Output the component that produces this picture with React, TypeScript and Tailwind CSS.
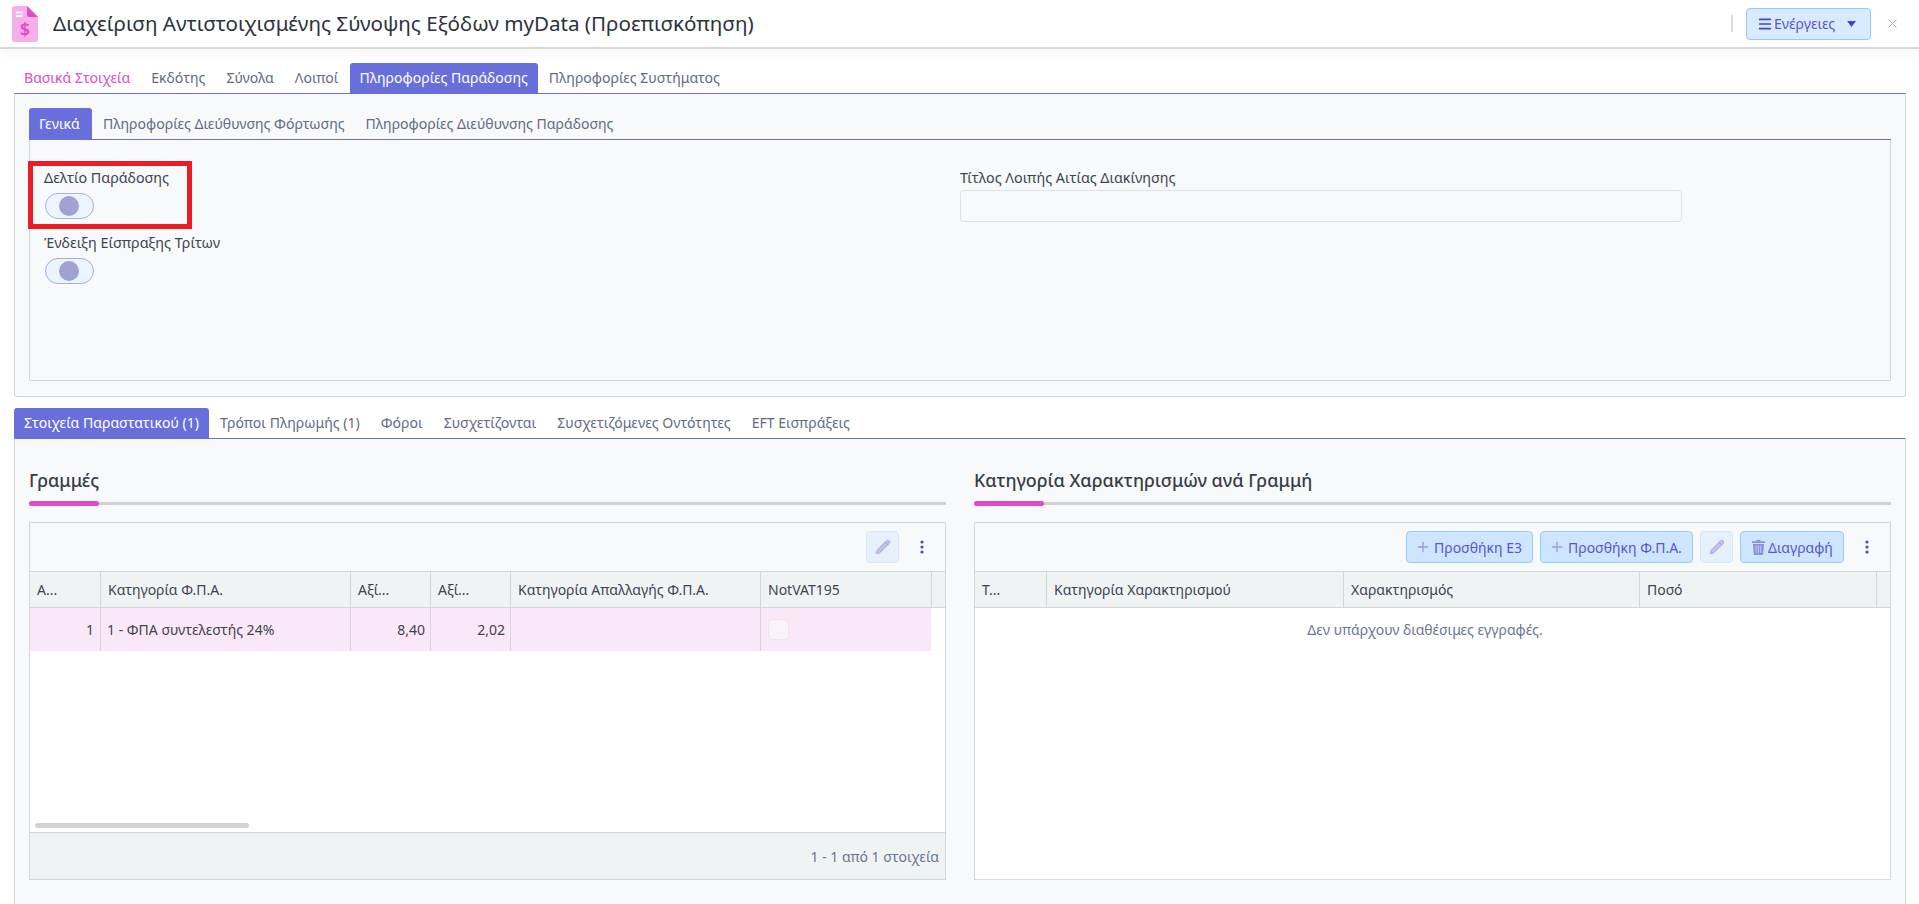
import { Menu, Pencil, Plus, X } from "lucide-react";

const topTabs = ["Βασικά Στοιχεία", "Εκδότης", "Σύνολα", "Λοιποί", "Πληροφορίες Παράδοσης", "Πληροφορίες Συστήματος"];
const innerTabs = ["Γενικά", "Πληροφορίες Διεύθυνσης Φόρτωσης", "Πληροφορίες Διεύθυνσης Παράδοσης"];
const lowerTabs = ["Στοιχεία Παραστατικού (1)", "Τρόποι Πληρωμής (1)", "Φόροι", "Συσχετίζονται", "Συσχετιζόμενες Οντότητες", "EFT Εισπράξεις"];

function Tab({ label, active, pink, w }: { label: string; active?: boolean; pink?: boolean; w?: string }) {
  return (
    <div
      className={
        "h-full px-[10px] flex items-center text-[14.05px] whitespace-nowrap rounded-t-[3px] " +
        (active ? "bg-[#686fdb] text-white " : pink ? "text-[#e44bc4] " : "text-[#5f6b85] ") +
        (w ?? "")
      }
    >
      {label}
    </div>
  );
}

function Toggle() {
  return (
    <div className="w-[49px] h-[26px] pr-[1px] rounded-full border border-[#a9aedb] bg-[#ebf5ff] flex items-center justify-center">
      <div className="w-[20px] h-[20px] rounded-full bg-[#a0a2d0]" />
    </div>
  );
}

function Kebab() {
  return (
    <svg width="4" height="14" viewBox="0 0 4 14" className="text-[#5046c8]">
      <circle cx="2" cy="2" r="1.6" fill="currentColor" />
      <circle cx="2" cy="7" r="1.6" fill="currentColor" />
      <circle cx="2" cy="12" r="1.6" fill="currentColor" />
    </svg>
  );
}

function EditButton() {
  return (
    <div className="w-[33px] h-[32px] rounded-[4px] border border-[#d6e8fb] bg-[#e6f1fc] flex items-center justify-center">
      <Pencil size={16} className="text-[#aaa3e3]" fill="#c5c0ee" strokeWidth={1.5} />
    </div>
  );
}

function ActionButton({ icon, label, w }: { icon: React.ReactNode; label: string; w: string }) {
  return (
    <div className={"h-[32px] rounded-[4px] border border-[#98caf9] bg-[#cde5fe] flex items-center gap-[3px] text-[14px] text-[#5a55cf] " + w}>
      {icon}
      {label}
    </div>
  );
}

function TrashIcon() {
  return (
    <svg width="13" height="15" viewBox="0 0 13 15" fill="#8f8ddc">
      <rect x="4.5" y="0" width="4" height="1.5" rx="0.5" />
      <rect x="0" y="1.2" width="13" height="1.8" rx="0.5" />
      <path d="M1 4H12L11.2 14a1 1 0 0 1-1 1H2.8a1 1 0 0 1-1-1Z" />
      <path d="M4.2 5.5V13M6.5 5.5V13M8.8 5.5V13" stroke="#cde5fe" strokeWidth="0.8" />
    </svg>
  );
}

function SectionTitle({ title }: { title: string }) {
  return (
    <div>
      <h3 className="h-[35px] flex items-center text-[17.9px] font-medium text-[#373d47]">{title}</h3>
      <div className="relative h-[3px] mt-[4px] bg-[#d0d1d4]">
        <div className="absolute left-0 top-[-1px] w-[70px] h-[5px] rounded-full bg-[#e04ac6]" />
      </div>
    </div>
  );
}

function HeadCell({ label, w }: { label?: string; w: string }) {
  return (
    <div className={"h-full flex items-center pl-[7px] text-[14px] text-[#3e4450] whitespace-nowrap border-r border-[#d4d7da] " + w}>
      {label}
    </div>
  );
}

export default function App() {
  return (
    <div className="relative w-[1919px] h-[904px] overflow-hidden bg-white font-['Noto_Sans',sans-serif]">
      {/* Header */}
      <header className="relative h-[49px] flex items-center border-b-2 border-[#d6d6d6] shadow-[0_3px_10px_rgba(0,0,0,0.05)]">
        <svg width="26" height="36" viewBox="0 0 26 36" className="ml-[12px]">
          <path d="M3 0H15L26 11V33a3 3 0 0 1-3 3H3a3 3 0 0 1-3-3V3a3 3 0 0 1 3-3Z" fill="#f5b0e9" />
          <path d="M15 0L26 11H17a2 2 0 0 1-2-2Z" fill="#e04ac6" />
          <rect x="4" y="5.7" width="6.7" height="1.7" fill="#fff" />
          <rect x="4" y="9.3" width="6.7" height="1.7" fill="#fff" />
          <text x="13" y="29.5" textAnchor="middle" fontSize="18" fontWeight="600" fill="#e04ac6" fontFamily="Noto Sans">$</text>
        </svg>
        <h1 className="ml-[15px] text-[20.6px] text-[#2c323c] whitespace-nowrap">Διαχείριση Αντιστοιχισμένης Σύνοψης Εξόδων myData (Προεπισκόπηση)</h1>
        <div className="ml-auto w-[2px] h-[17px] bg-[#d5dde5]" />
        <div className="ml-[13px] w-[125px] h-[32px] rounded-[4px] border border-[#98caf9] bg-[#d8eafe] flex items-center pl-[10px] text-[14px] text-[#5a55cf]">
          <Menu size={16} strokeWidth={2.6} className="text-[#4a42c8]" />
          <span className="ml-[1px]">Ενέργειες</span>
          <svg width="9" height="6" viewBox="0 0 9 6" className="ml-[12px] text-[#4a42c8]">
            <path d="M0 0H9L4.5 6Z" fill="currentColor" />
          </svg>
        </div>
        <X size={15} strokeWidth={1.6} className="ml-[14px] mr-[19px] text-[#b7b3e8]" />
      </header>

      {/* Upper tabs */}
      <div className="absolute left-[14px] top-[63px] w-[1892px]">
        <div className="h-[30px] flex gap-[1px]">
          {topTabs.map((t, i) => (
            <Tab key={t} label={t} active={i === 4} pink={i === 0} />
          ))}
        </div>
        <div className="h-[304px] px-[14px] pt-[14px] border-t border-t-[#686fdb] border-x border-b border-x-[#d4d6d9] border-b-[#d4d6d9] rounded-b-[3px] bg-[#f8f9fb]">
          <div className="h-[32px] flex gap-[1px] border-b border-[#686fdb]">
            {innerTabs.map((t, i) => (
              <Tab key={t} label={t} active={i === 0} w={i === 0 ? "w-[63px]" : ""} />
            ))}
          </div>
          <div className="relative h-[241px] border-x border-b border-[#d4d6d9] rounded-b-[2px]">
            <div className="absolute left-[14px] top-[28px] text-[14.3px] leading-[20px] text-[#3e4450]">Δελτίο Παράδοσης</div>
            <div className="absolute left-[15px] top-[53px]"><Toggle /></div>
            <div className="absolute left-[14px] top-[93px] text-[14.3px] leading-[20px] text-[#3e4450]">Ένδειξη Είσπραξης Τρίτων</div>
            <div className="absolute left-[15px] top-[118px]"><Toggle /></div>
            <div className="absolute left-[930px] top-[28px] text-[14.3px] leading-[20px] text-[#3e4450]">Τίτλος Λοιπής Αιτίας Διακίνησης</div>
            <div className="absolute left-[930px] top-[50px] w-[722px] h-[32px] rounded-[4px] border border-[#dfe1e4] bg-[#f8f9fb]" />
          </div>
        </div>
      </div>

      {/* Highlight */}
      <div className="absolute left-[28px] top-[161px] w-[164px] h-[68px] border-[5px] border-[#ed1c24]" />

      {/* Lower tabs */}
      <div className="absolute left-[14px] top-[408px] w-[1892px] h-[496px]">
        <div className="h-[30px] flex gap-[1px]">
          {lowerTabs.map((t, i) => (
            <Tab key={t} label={t} active={i === 0} />
          ))}
        </div>
        <div className="relative h-[466px] border-t border-t-[#686fdb] border-x border-x-[#d4d6d9] bg-[#f8f9fb]">
          {/* Left grid */}
          <div className="absolute left-[14px] top-[24px] w-[917px]">
            <SectionTitle title="Γραμμές" />
          </div>
          <div className="absolute left-[14px] top-[83px] w-[917px] h-[358px] border border-[#d4d6d9] flex flex-col">
            <div className="h-[48px] flex items-center justify-end gap-[21px] pr-[21px]">
              <EditButton />
              <Kebab />
            </div>
            <div className="h-[37px] flex border-y border-[#d4d6d9] bg-[#f0f3f4]">
              <HeadCell label="Α..." w="w-[71px]" />
              <HeadCell label="Κατηγορία Φ.Π.Α." w="w-[250px]" />
              <HeadCell label="Αξί..." w="w-[80px]" />
              <HeadCell label="Αξί..." w="w-[80px]" />
              <HeadCell label="Κατηγορία Απαλλαγής Φ.Π.Α." w="w-[250px]" />
              <HeadCell label="NotVAT195" w="w-[171px]" />
            </div>
            <div className="flex-1 relative bg-white">
              <div className="flex w-[901px] h-[43px] bg-[#fae7f8] text-[14px] text-[#3e4450]">
                <div className="w-[71px] pr-[6px] flex items-center justify-end border-r border-[#d4d6d9]">1</div>
                <div className="w-[250px] pl-[6px] flex items-center border-r border-[#d4d6d9]">1 - ΦΠΑ συντελεστής 24%</div>
                <div className="w-[80px] pr-[5px] flex items-center justify-end border-r border-[#d4d6d9]">8,40</div>
                <div className="w-[80px] pr-[5px] flex items-center justify-end border-r border-[#d4d6d9]">2,02</div>
                <div className="w-[250px] border-r border-[#d4d6d9]" />
                <div className="w-[170px] pl-[7px] pt-[11px]">
                  <div className="w-[21px] h-[21px] rounded-[4px] border border-[#eee3ef] bg-[#f8f3f9]" />
                </div>
              </div>
              <div className="absolute left-[5px] bottom-[4px] w-[214px] h-[5px] rounded-full bg-[#d0d3d5]" />
            </div>
            <div className="h-[47px] flex items-center justify-end pr-[6px] border-t border-[#d4d6d9] bg-[#f0f3f4] text-[14px] text-[#6b7590]">1 - 1 από 1 στοιχεία</div>
          </div>

          {/* Right grid */}
          <div className="absolute left-[959px] top-[24px] w-[917px]">
            <SectionTitle title="Κατηγορία Χαρακτηρισμών ανά Γραμμή" />
          </div>
          <div className="absolute left-[959px] top-[83px] w-[917px] h-[358px] border border-[#d4d6d9] flex flex-col">
            <div className="h-[48px] flex items-center justify-end pr-[21px]">
              <ActionButton icon={<Plus size={16} className="text-[#9d9be0]" />} label="Προσθήκη Ε3" w="w-[127px] pl-[8px]" />
              <ActionButton icon={<Plus size={16} className="text-[#9d9be0]" />} label="Προσθήκη Φ.Π.Α." w="w-[153px] pl-[8px] ml-[7px]" />
              <div className="ml-[7px]"><EditButton /></div>
              <ActionButton icon={<TrashIcon />} label="Διαγραφή" w="w-[104px] pl-[11px] ml-[7px]" />
              <div className="ml-[21px]"><Kebab /></div>
            </div>
            <div className="h-[37px] flex border-y border-[#d4d6d9] bg-[#f0f3f4]">
              <HeadCell label="Τ..." w="w-[72px]" />
              <HeadCell label="Κατηγορία Χαρακτηρισμού" w="w-[297px]" />
              <HeadCell label="Χαρακτηρισμός" w="w-[296px]" />
              <HeadCell label="Ποσό" w="w-[237px]" />
            </div>
            <div className="flex-1 bg-white">
              <div className="w-[900px] pt-[11px] text-center text-[14px] text-[#6b7590]">Δεν υπάρχουν διαθέσιμες εγγραφές.</div>
            </div>
          </div>
        </div>
      </div>
    </div>
  );
}
